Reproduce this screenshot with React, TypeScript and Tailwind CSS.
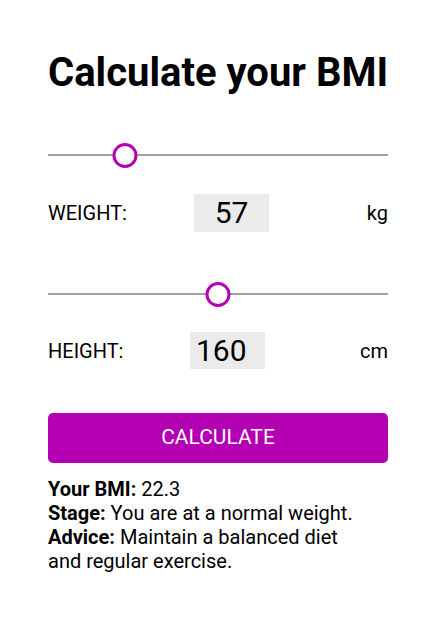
import React, { useState } from 'react';

const Slider: React.FC<{ value: number; min: number; max: number }> = ({ value, min, max }) => {
  const frac = (value - min) / (max - min);
  return (
    <div className="relative h-6 w-full">
      <div className="absolute left-0 right-0 top-[11px] h-[2px] bg-[#a0a0a0]" />
      <div
        className="absolute top-0 h-[25px] w-[25px] -translate-x-1/2 rounded-full border-[3px] border-[#b300b3] bg-white"
        style={{ left: `calc(12px + (100% - 24px) * ${frac})` }}
      />
    </div>
  );
};

export default function App() {
  const [weight] = useState(57);
  const [height] = useState(160);

  const bmi = (weight / ((height / 100) * (height / 100))).toFixed(1);

  return (
    <div className="min-h-screen bg-white text-black font-['Roboto',sans-serif]">
      <div className="ml-12 w-[340px] pt-[49px] flex flex-col">
        <h1 className="whitespace-nowrap text-[40px] font-bold leading-[48px]">Calculate your BMI</h1>

        <div className="mt-[46px]">
          <Slider value={weight} min={20} max={200} />
        </div>
        <div className="mt-[27px] flex items-center h-[38px]">
          <span className="w-[146px] text-[20px] leading-6">WEIGHT:</span>
          <div className="w-[75px] h-[38px] bg-[#ebebeb] flex items-center justify-center text-[30px] leading-none">
            {weight}
          </div>
          <span className="ml-auto text-[20px] leading-6">kg</span>
        </div>

        <div className="mt-[50px]">
          <Slider value={height} min={100} max={220} />
        </div>
        <div className="mt-[26px] flex items-center h-[37px]">
          <span className="w-[142px] text-[20px] leading-6">HEIGHT:</span>
          <div className="w-[75px] h-[37px] bg-[#ebebeb] flex items-center pl-[6px] text-[30px] leading-none">
            {height}
          </div>
          <span className="ml-auto text-[20px] leading-6">cm</span>
        </div>

        <button className="mt-[44px] h-[50px] w-full rounded-[5px] bg-[#b300b3] text-white text-[21px]">
          CALCULATE
        </button>

        <div className="mt-[14px] w-[310px] text-[20px] leading-6">
          <p>
            <b>Your BMI:</b> {bmi}
          </p>
          <p>
            <b>Stage:</b> You are at a normal weight.
          </p>
          <p>
            <b>Advice:</b> Maintain a balanced diet and regular exercise.
          </p>
        </div>
      </div>
    </div>
  );
}
